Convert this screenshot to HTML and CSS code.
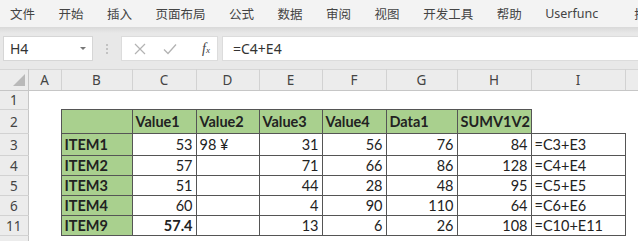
FILE: index.html
```html
<!DOCTYPE html>
<html lang="zh">
<head>
  <meta charset="UTF-8">
  <title>Excel</title>
  <link rel="stylesheet" href="styles.css">
</head>
<body>
  <div class="menu">
    <span>文件</span>
    <span>开始</span>
    <span>插入</span>
    <span>页面布局</span>
    <span>公式</span>
    <span>数据</span>
    <span>审阅</span>
    <span>视图</span>
    <span>开发工具</span>
    <span>帮助</span>
    <span>Userfunc</span>
    <svg class="search" width="14" height="14" viewBox="0 0 14 14">
      <circle cx="8.5" cy="5.5" r="4.3" fill="none" stroke="#555" stroke-width="1.1"/>
      <line x1="5.4" y1="8.6" x2="1" y2="13" stroke="#555" stroke-width="1.2"/>
    </svg>
    <span>搜</span>
  </div>

  <div class="fbar">
    <div class="namebox">
      <span>H4</span>
      <i class="caret"></i>
    </div>
    <div class="dots"><b></b><b></b><b></b></div>
    <div class="btns">
      <svg width="12" height="12" viewBox="0 0 12 12">
        <path d="M1 1 L11 11 M11 1 L1 11" stroke="#b3b3b3" stroke-width="1.2"/>
      </svg>
      <svg width="14" height="12" viewBox="0 0 14 12">
        <path d="M1 6.5 L5 10.5 L13 1.5" fill="none" stroke="#b3b3b3" stroke-width="1.3"/>
      </svg>
      <span class="fx">f<small>x</small></span>
    </div>
    <div class="formula">=C4+E4</div>
  </div>

  <table class="sheet">
    <colgroup>
      <col class="c-rh"><col class="c-a"><col class="c-b"><col class="c-c"><col class="c-d">
      <col class="c-e"><col class="c-f"><col class="c-g"><col class="c-h"><col class="c-i"><col class="c-j">
    </colgroup>
    <tr class="h-hdr">
      <th class="corner">
        <svg width="28" height="20" viewBox="0 0 28 20"><polygon points="13,16 25,16 25,4" fill="#b9b9b9"/></svg>
      </th>
      <th class="ch">A</th><th class="ch">B</th><th class="ch">C</th><th class="ch">D</th><th class="ch">E</th>
      <th class="ch">F</th><th class="ch">G</th><th class="ch">H</th><th class="ch">I</th><th class="ch"></th>
    </tr>
    <tr class="h-r1">
      <th class="rh">1</th><td></td><td></td><td></td><td></td><td></td><td></td><td></td><td></td><td></td><td></td>
    </tr>
    <tr class="h-r2">
      <th class="rh">2</th><td></td>
      <td class="b g"></td>
      <td class="b g bold">Value1</td>
      <td class="b g bold">Value2</td>
      <td class="b g bold">Value3</td>
      <td class="b g bold">Value4</td>
      <td class="b g bold">Data1</td>
      <td class="b g bold">SUMV1V2</td>
      <td></td><td></td>
    </tr>
    <tr class="h-r3">
      <th class="rh">3</th><td></td>
      <td class="b g bold">ITEM1</td>
      <td class="b num">53</td>
      <td class="b">98 ¥</td>
      <td class="b num">31</td>
      <td class="b num">56</td>
      <td class="b num">76</td>
      <td class="b num">84</td>
      <td class="b">=C3+E3</td><td></td>
    </tr>
    <tr class="h-row">
      <th class="rh">4</th><td></td>
      <td class="b g bold">ITEM2</td>
      <td class="b num">57</td>
      <td class="b"></td>
      <td class="b num">71</td>
      <td class="b num">66</td>
      <td class="b num">86</td>
      <td class="b num">128</td>
      <td class="b">=C4+E4</td><td></td>
    </tr>
    <tr class="h-row">
      <th class="rh">5</th><td></td>
      <td class="b g bold">ITEM3</td>
      <td class="b num">51</td>
      <td class="b"></td>
      <td class="b num">44</td>
      <td class="b num">28</td>
      <td class="b num">48</td>
      <td class="b num">95</td>
      <td class="b">=C5+E5</td><td></td>
    </tr>
    <tr class="h-row">
      <th class="rh">6</th><td></td>
      <td class="b g bold">ITEM4</td>
      <td class="b num">60</td>
      <td class="b"></td>
      <td class="b num">4</td>
      <td class="b num">90</td>
      <td class="b num">110</td>
      <td class="b num">64</td>
      <td class="b">=C6+E6</td><td></td>
    </tr>
    <tr class="h-row">
      <th class="rh">11</th><td></td>
      <td class="b g bold">ITEM9</td>
      <td class="b num bold">57.4</td>
      <td class="b"></td>
      <td class="b num">13</td>
      <td class="b num">6</td>
      <td class="b num">26</td>
      <td class="b num">108</td>
      <td class="b">=C10+E11</td><td></td>
    </tr>
    <tr class="h-row">
      <th class="rh">12</th><td></td><td></td><td></td><td></td><td></td><td></td><td></td><td></td><td></td><td></td>
    </tr>
  </table>
</body>
</html>
```

FILE: styles.css
```css
body {
  margin: 0;
  width: 638px;
  height: 241px;
  overflow: hidden;
  background: #fff;
  font-family: "Noto Sans", "Noto Sans CJK SC", sans-serif;
}

/* ribbon tabs */
.menu {
  height: 27px;
  display: flex;
  align-items: center;
  gap: 23.5px;
  padding-left: 10px;
  background: #f3f3f3;
  font-size: 12.5px;
  color: #444;
  white-space: nowrap;
}
.menu .search {
  margin-left: 3px;
  margin-right: -14px;
}

/* formula bar */
.fbar {
  height: 42px;
  box-sizing: border-box;
  padding-top: 9px;
  display: flex;
  align-items: flex-start;
  background: linear-gradient(#d9d9d9, #e8e8e8 6px, #e8e8e8);
}
.namebox {
  margin-left: 3px;
  width: 90px;
  height: 25px;
  box-sizing: border-box;
  border: 1px solid #d6d6d6;
  background: #fff;
  display: flex;
  align-items: center;
  justify-content: space-between;
  padding: 0 6px 0 6px;
  font-size: 14px;
  color: #333;
}
.caret {
  width: 0;
  height: 0;
  border-left: 3px solid transparent;
  border-right: 3px solid transparent;
  border-top: 3px solid #777;
}
.dots {
  width: 28px;
  height: 25px;
  display: flex;
  flex-direction: column;
  align-items: center;
  justify-content: center;
  gap: 2px;
}
.dots b {
  width: 2px;
  height: 2px;
  background: #c2c2c2;
}
.btns {
  width: 97px;
  height: 25px;
  box-sizing: border-box;
  border: 1px solid #dcdcdc;
  background: #fff;
  display: flex;
  align-items: center;
  padding-left: 12px;
  gap: 17px;
}
.fx {
  margin-left: 8px;
  font-family: "Liberation Serif", serif;
  font-style: italic;
  font-size: 14px;
  color: #444;
}
.fx small {
  font-size: 9px;
}
.formula {
  margin-left: 4px;
  flex: 1;
  height: 25px;
  box-sizing: border-box;
  border: 1px solid #dcdcdc;
  border-right: none;
  background: #fff;
  padding-left: 10px;
  line-height: 23px;
  font-size: 14px;
  color: #333;
}

/* sheet grid */
.sheet {
  border-collapse: collapse;
  table-layout: fixed;
  width: 660px;
  font-family: Lato, "Liberation Sans", sans-serif;
  font-size: 14.5px;
  color: #222;
}
.c-rh { width: 28px; }
.c-a { width: 33px; }
.c-b { width: 71px; }
.c-c { width: 64px; }
.c-d { width: 63px; }
.c-e { width: 63px; }
.c-f { width: 64px; }
.c-g { width: 71px; }
.c-h { width: 74px; }
.c-i { width: 94px; }
.c-j { width: 35px; }

.h-hdr { height: 20px; }
.h-r1 { height: 18px; }
.h-r2 { height: 24px; }
.h-r3 { height: 22px; }
.h-row { height: 20px; }

th, td {
  padding: 0 3px;
  white-space: nowrap;
  overflow: hidden;
}
th {
  background: #ececec;
  font-family: "Noto Sans", sans-serif;
  font-weight: normal;
  font-size: 13.5px;
  color: #444;
}
.corner {
  padding: 0;
  line-height: 0;
  border-right: 1px solid #c6c6c6;
  border-bottom: 1px solid #c6c6c6;
  border-top: 1px solid #d6d6d6;
}
.ch {
  border-right: 1px solid #d2d2d2;
  border-bottom: 1px solid #c6c6c6;
  border-top: 1px solid #d6d6d6;
}
.rh {
  border-bottom: 1px solid #d2d2d2;
  border-right: 1px solid #c6c6c6;
}

.b { border: 1px solid #555; }
.g { background: #a9d08e; }
.bold { font-weight: bold; }
.num { text-align: right; }
```
